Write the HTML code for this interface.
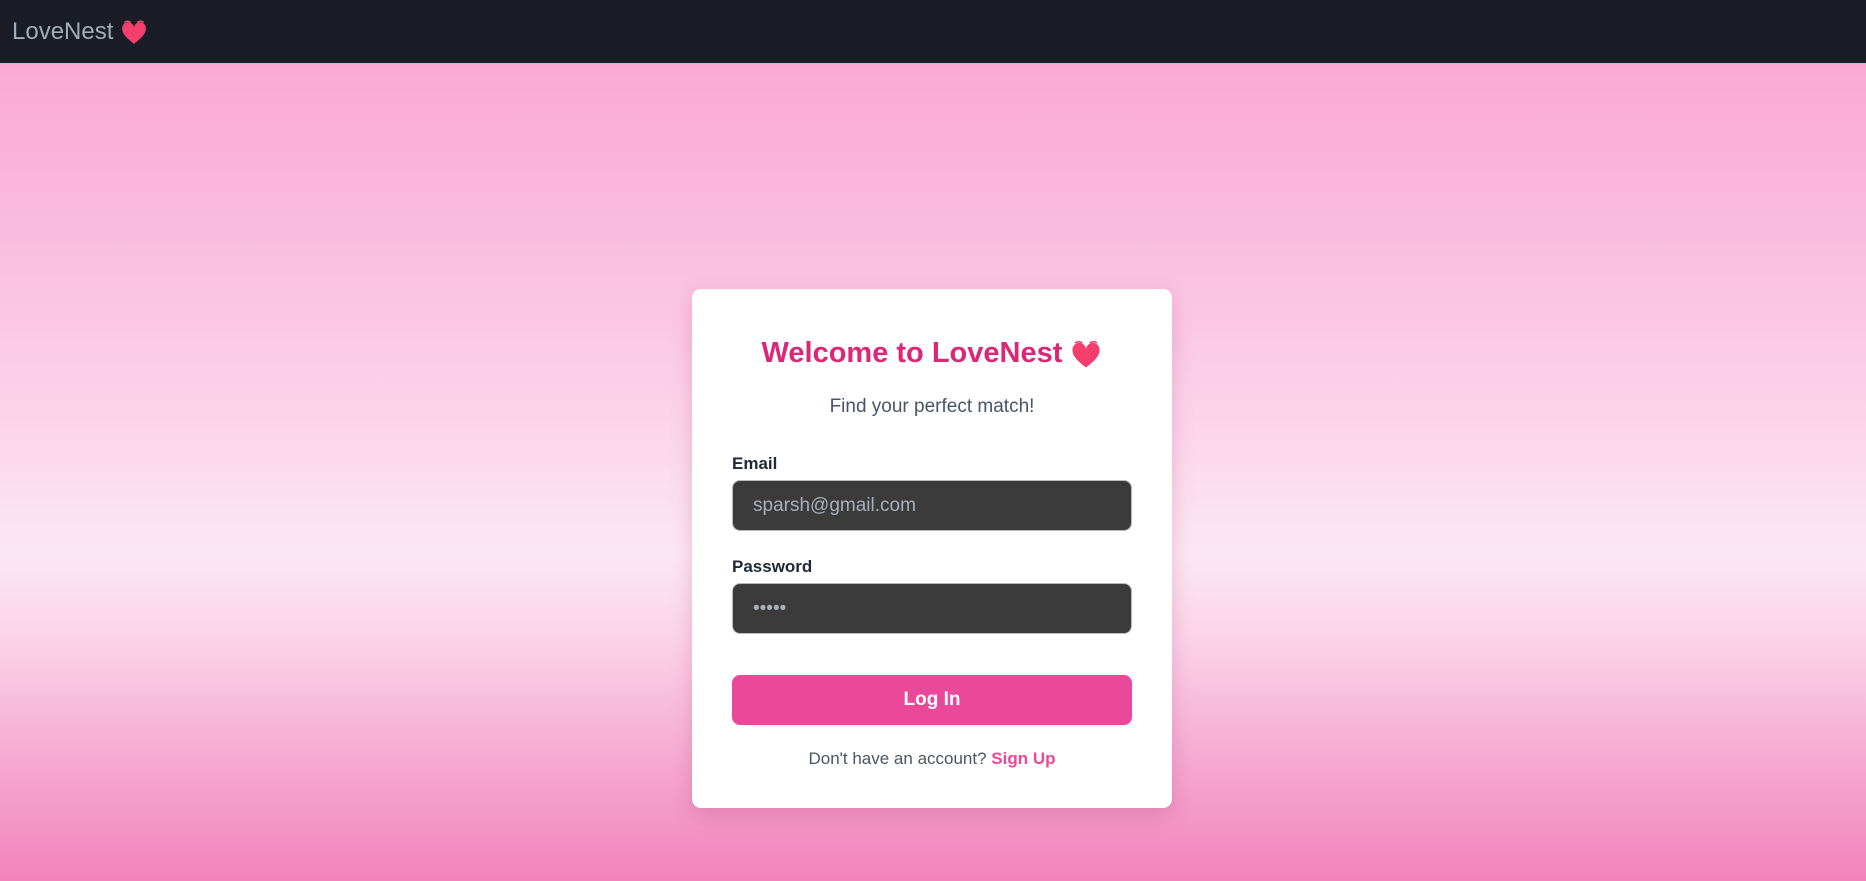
<!DOCTYPE html>
<html><head><meta charset="utf-8"><style>
*{margin:0;padding:0;box-sizing:border-box}
body{width:1866px;height:881px;overflow:hidden;font-family:"Liberation Sans",sans-serif;background:linear-gradient(180deg,#f9a8d4 63px,#fbc4e2 300px,#fce7f3 555px,#fbd3e8 640px,#f5a9d0 760px,#f283bb 881px)}
.nav{height:63px;background:#1a1d26;display:flex;align-items:center;padding-left:12px;color:#a3acb9;font-size:24px}
.card{position:absolute;left:692px;top:289px;width:480px;height:519px;background:#fff;border-radius:9px;box-shadow:0 8px 20px rgba(180,60,120,.25);padding:0 40px}
h1{color:#db2777;font-size:29px;text-align:center;margin-top:44px;height:40px;line-height:40px;font-weight:bold}
.sub{text-align:center;color:#475569;font-size:19px;margin-top:22px;line-height:24px}
label{display:block;font-weight:bold;color:#1f2937;font-size:17px;line-height:22px}
.in{height:51px;background:#3b3b3b;border:1px solid #bbb;border-radius:8px;color:#a8b0bd;font-size:19px;padding-left:20px;line-height:49px;margin-top:5px}
.btn{height:50px;background:#ec4899;border-radius:8px;color:#fff;font-weight:bold;font-size:19px;text-align:center;line-height:50px}
.foot{text-align:center;color:#4b5563;font-size:17px;margin-top:24px}
.foot b{color:#ec4899}
svg{vertical-align:middle}
</style></head><body>
<div class="nav">LoveNest&nbsp;<svg width="28" height="28" viewBox="0 0 26 26"><path d="M13 24C5 18 2 14 2 10a5.5 5.5 0 0 1 11-1 5.5 5.5 0 0 1 11 1c0 4-3 8-11 14z" fill="#f43f6e"/><path d="M4 4q3-2 6 0M16 4q3-2 6 0" stroke="#e6486f" stroke-width="1.3" fill="none"/></svg></div>
<div class="card">
<h1>Welcome to LoveNest <svg width="32" height="32" viewBox="0 0 26 26"><path d="M13 24C5 18 2 14 2 10a5.5 5.5 0 0 1 11-1 5.5 5.5 0 0 1 11 1c0 4-3 8-11 14z" fill="#f43f6e"/><path d="M4 4q3-2 6 0M16 4q3-2 6 0" stroke="#e6486f" stroke-width="1.3" fill="none"/></svg></h1>
<div class="sub">Find your perfect match!</div>
<label style="margin-top:34px">Email</label>
<div class="in">sparsh@gmail.com</div>
<label style="margin-top:25px">Password</label>
<div class="in">•••••</div>
<div class="btn" style="margin-top:41px">Log In</div>
<div class="foot">Don't have an account? <b>Sign Up</b></div>
</div>
</body></html>
